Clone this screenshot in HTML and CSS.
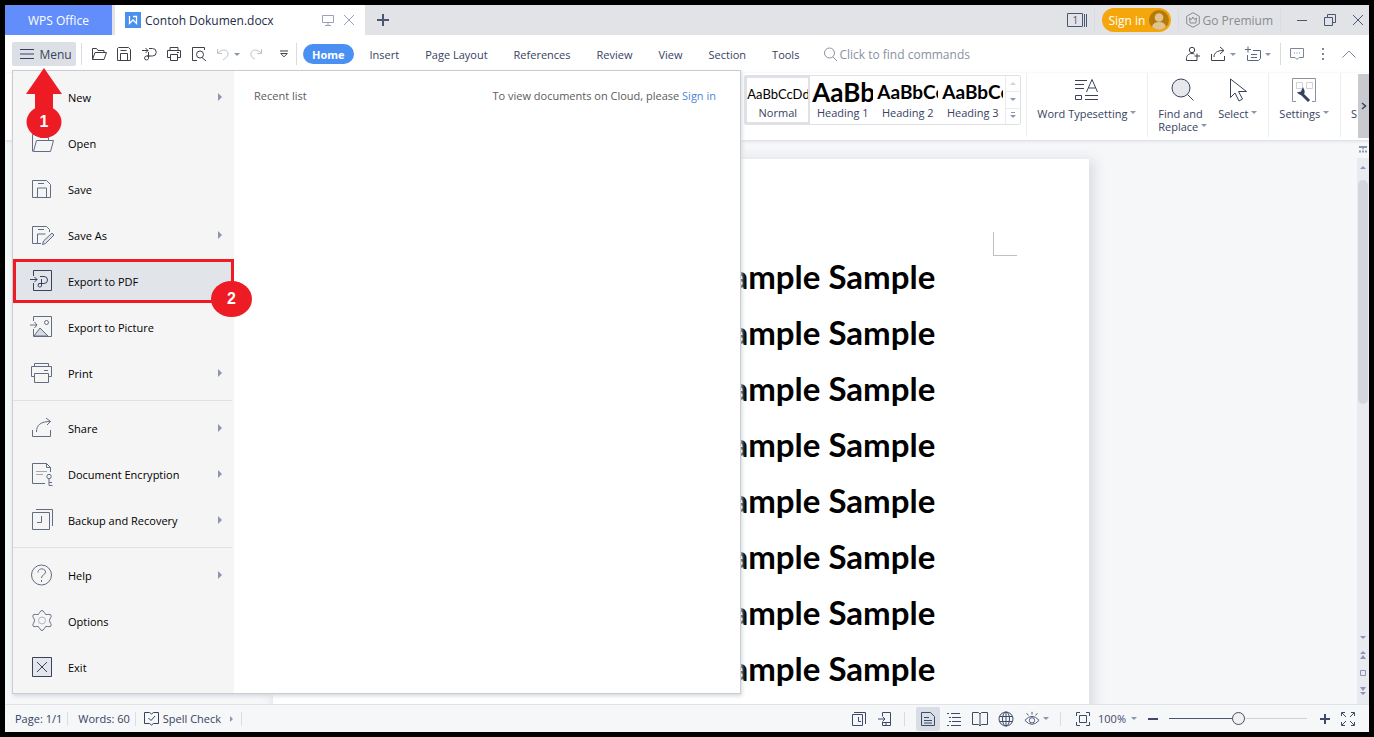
FILE: index.html
```html
<!DOCTYPE html>
<html lang="en">
<head>
    <meta charset="UTF-8">
    <meta name="viewport" content="width=device-width, initial-scale=1.0">
    <title>Contoh Dokumen.docx - WPS Office</title>
    <link rel="stylesheet" href="styles.css">
</head>
<body>
    <header class="titlebar">
        <button class="app-tab">WPS Office</button>
        <div class="doc-tab">
            <svg class="logo" width="16" height="16" viewBox="0 0 16 16"><rect width="16" height="16" fill="#4a90ee"/><path d="M4.500 4v7.500L8 8l3.500 3.500v-7H8" fill="none" stroke="#fff" stroke-width="1.300"/></svg>
            <span class="doc-name">Contoh Dokumen.docx</span>
            <button class="icon-btn pale" aria-label="Show on desktop"><svg width="12" height="12" viewBox="0 0 12 12"><path d="M.5 1.500h11v7H.5zM6 8.500v3M3 11.500h6"/></svg></button>
            <button class="icon-btn pale" aria-label="Close tab"><svg width="12" height="12" viewBox="0 0 12 12"><path d="M1 1l10 10M11 1L1 11"/></svg></button>
        </div>
        <button class="icon-btn new-tab" aria-label="New tab"><svg width="12" height="12" viewBox="0 0 12 12"><path d="M6 0v12M0 6h12" stroke-width="2"/></svg></button>
        <div class="title-right">
            <button class="icon-btn pages" aria-label="Window list"><svg width="20" height="14" viewBox="0 0 20 14"><path d="M.5.5h15v13H.5zM17.500 1v13M19.500 1v13"/></svg><span>1</span></button>
            <span class="divider"></span>
            <button class="sign-in">Sign in
                <svg width="20" height="20" viewBox="0 0 20 20"><circle cx="10" cy="10" r="10" fill="#b57a08"/><circle cx="10" cy="7.500" r="4.300" fill="#dfc48f"/><path d="M3 17q1-5 7-5t7 5q-7 6-14 0z" fill="#dfc48f"/></svg>
            </button>
            <span class="divider"></span>
            <button class="premium">
                <svg width="14" height="16" viewBox="0 0 14 16"><path d="M7 .7l6.300 3.600v7.400L7 15.300.7 11.700V4.300zM3.500 6l2 1.500L7 5l1.500 2.500 2-1.500-.7 5H4.200z"/></svg>
                Go Premium
            </button>
            <span class="divider"></span>
            <div class="window-btns">
                <button class="icon-btn" aria-label="Minimize"><svg width="12" height="12" viewBox="0 0 12 12"><path d="M1 6.500h10"/></svg></button>
                <button class="icon-btn" aria-label="Restore"><svg width="12" height="12" viewBox="0 0 12 12"><path d="M.5 3.500h8v8h-8zM3.500 3V.5h8v8H9"/></svg></button>
                <button class="icon-btn" aria-label="Close"><svg width="12" height="12" viewBox="0 0 12 12"><path d="M1 1l10 10M11 1L1 11"/></svg></button>
            </div>
        </div>
    </header>

    <div class="toolbar">
        <div class="menu-anchor">
            <button class="menu-btn">
                <svg width="14" height="10" viewBox="0 0 14 10"><path d="M0 .5h14M0 5h14M0 9.500h14"/></svg>
                Menu
            </button>
            <div class="callout-one">
                <svg width="36" height="70" viewBox="0 0 36 70"><path d="M18 0l18 26h-9v20H9V26H0z" fill="#ed1c24"/><ellipse cx="18" cy="54" rx="17.500" ry="16" fill="#ed1c24"/></svg>
                <span>1</span>
            </div>
        </div>
        <span class="divider"></span>
        <div class="quick">
            <button class="icon-btn" aria-label="Open"><svg width="16" height="16" viewBox="0 0 16 16"><path d="M1.500 13.500v-11h4l1.500 2h6v2M1.500 13.500l2.500-7h11.500l-2.500 7z"/></svg></button>
            <button class="icon-btn" aria-label="Save"><svg width="16" height="16" viewBox="0 0 16 16"><path d="M1.500 2.500l1-1h10l2 2v11h-13zM4.500 14V7.500h7V14M4.500 4.500h6"/></svg></button>
            <button class="icon-btn" aria-label="Export to PDF"><svg width="16" height="16" viewBox="0 0 16 16"><path d="M1 4.500h6M4.500 2L7 4.500 4.500 7M8 2.500h3.500a3.500 3.500 0 010 7.500H6M7.500 6v6.500a2 2 0 11-2-2.500h3"/></svg></button>
            <button class="icon-btn" aria-label="Print"><svg width="16" height="16" viewBox="0 0 16 16"><path d="M4 4V1.500h8V4M4 11.500H1.500v-7h13v7H12M4.500 8.500h7v6h-7zM11 6.500h2"/></svg></button>
            <button class="icon-btn" aria-label="Print preview"><svg width="16" height="16" viewBox="0 0 16 16"><path d="M6 14.500H1.500v-13h12V4M11 11.500l4 3.500"/><circle cx="9" cy="8.500" r="3.500"/></svg></button>
            <button class="icon-btn faint with-caret" aria-label="Undo"><svg width="14" height="14" viewBox="0 0 14 14"><path d="M1.500 2v4.500H6M1.500 6.500C5 2 11 2 12 6c.5 3-2 5-5 7"/></svg><i class="caret"></i></button>
            <button class="icon-btn faint" aria-label="Redo"><svg width="14" height="14" viewBox="0 0 14 14"><path d="M12.500 2v4.500H8M12.500 6.500C9 2 3 2 2 6c-.5 3 1 5 4 6"/></svg></button>
            <button class="icon-btn more" aria-label="Customize"><svg width="8" height="8" viewBox="0 0 8 8"><path d="M0 1h8M.7 3.500L4 6.800l3.300-3.300z"/></svg></button>
        </div>
        <span class="divider"></span>
        <nav class="tabs">
            <button class="tab active">Home</button>
            <button class="tab">Insert</button>
            <button class="tab">Page Layout</button>
            <button class="tab">References</button>
            <button class="tab">Review</button>
            <button class="tab">View</button>
            <button class="tab">Section</button>
            <button class="tab">Tools</button>
        </nav>
        <label class="search">
            <svg width="16" height="16" viewBox="0 0 16 16"><circle cx="6.500" cy="7" r="5"/><path d="M10 11l4 4"/></svg>
            <input type="text" placeholder="Click to find commands" aria-label="Find commands">
        </label>
        <div class="tool-right">
            <button class="icon-btn dark" aria-label="Invite"><svg width="16" height="16" viewBox="0 0 16 16"><circle cx="7" cy="4" r="2.700"/><path d="M9 14.500H1.500C1 10 3 7.500 7 7.500q1.500 0 2.500.7M9 14.500h3v-2M12 7.500v5M9.500 10H15"/></svg></button>
            <button class="icon-btn dark with-caret" aria-label="Share"><svg width="16" height="16" viewBox="0 0 16 16"><path d="M1.500 8v6.500h13V10M4 11c0-4 3-6.500 9-6.500M10 1l4 3.500L10 8"/></svg><i class="caret"></i></button>
            <button class="icon-btn with-caret" aria-label="Add note"><svg width="16" height="16" viewBox="0 0 16 16"><path d="M0 3.500h6M3 .5v6M8 4.500h7.500v8l-2 2h-11V9M6 8.500h6M6 11.500h6"/></svg><i class="caret"></i></button>
            <span class="divider"></span>
            <button class="icon-btn soft" aria-label="Comments"><svg width="14" height="14" viewBox="0 0 14 14"><path d="M.5 1.500h13v9H9l-2 2-2-2H.5zM4 6h1M6.500 6h1M9 6h1"/></svg></button>
            <button class="icon-btn soft" aria-label="More"><svg width="4" height="14" viewBox="0 0 4 14"><path d="M2 1v2M2 6v2M2 11v2" stroke-width="2"/></svg></button>
            <button class="icon-btn soft" aria-label="Collapse ribbon"><svg width="14" height="8" viewBox="0 0 14 8"><path d="M.5 7.500L7 1l6.500 6.500"/></svg></button>
        </div>
    </div>

    <div class="ribbon">
        <div class="gallery">
            <button class="style-card selected"><span class="preview">AaBbCcDd</span>Normal</button>
            <button class="style-card"><span class="preview big">AaBb</span>Heading 1</button>
            <button class="style-card"><span class="preview mid">AaBbCc</span>Heading 2</button>
            <button class="style-card"><span class="preview mid">AaBbCc</span>Heading 3</button>
            <div class="gallery-nav">
                <button aria-label="Previous styles"><i class="caret up"></i></button>
                <button aria-label="Next styles"><i class="caret"></i></button>
                <button aria-label="All styles"><i class="caret lined"></i></button>
            </div>
        </div>
        <div class="group">
            <button class="tool">
                <svg width="24" height="24" viewBox="0 0 24 24"><path d="M0 2.500h12M0 6.500h9M0 10.500h9M.5 17.500h6v4h-6zM10 17.500h13M10 21.500h13M11.500 14L17 1.500 22.500 14M13.500 10h7"/></svg>
                <span>Word Typesetting <i class="caret"></i></span>
            </button>
        </div>
        <div class="group">
            <button class="tool">
                <svg width="24" height="24" viewBox="0 0 24 24"><circle cx="10" cy="10" r="9" fill="#e6e8ec"/><path d="M16.500 16.500l6 6"/></svg>
                <span>Find and<br>Replace <i class="caret"></i></span>
            </button>
            <button class="tool">
                <svg width="24" height="24" viewBox="0 0 24 24"><path d="M4.500 1v18.500l4.500-4.500 4 8 3.500-2-4-7.500h8z"/></svg>
                <span>Select <i class="caret"></i></span>
            </button>
        </div>
        <div class="group">
            <button class="tool">
                <svg width="24" height="24" viewBox="0 0 24 24"><path d="M4 23.500H.5V.5h23v23H20" stroke="#8d919b"/><path d="M4.500 4.500h6v6h-6zM14.500 4.500h6v6h-6z" stroke="#d0d2d6"/><path d="M10 16l7 7" stroke-width="3"/><path d="M11 11.500c2 4-1 6-4 3.500l2.500-.5z" stroke-width="2"/></svg>
                <span>Settings <i class="caret"></i></span>
            </button>
        </div>
        <div class="group cut"><span>S</span></div>
        <button class="ribbon-next" aria-label="Scroll ribbon"><svg width="6" height="8" viewBox="0 0 6 8"><path d="M1 1l3.500 3L1 7" stroke-width="1.500"/></svg></button>
    </div>

    <main class="workspace">
        <div class="canvas">
            <article class="page">
                <div class="page-head"><span class="corner left"></span><span class="corner"></span></div>
                <div class="page-text">
                    <p>Sample Sample Sample Sample Sample</p>
                    <p>Sample Sample Sample Sample Sample</p>
                    <p>Sample Sample Sample Sample Sample</p>
                    <p>Sample Sample Sample Sample Sample</p>
                    <p>Sample Sample Sample Sample Sample</p>
                    <p>Sample Sample Sample Sample Sample</p>
                    <p>Sample Sample Sample Sample Sample</p>
                    <p>Sample Sample Sample Sample Sample</p>
                </div>
            </article>
        </div>
        <div class="scrollbar">
            <button class="ruler-btn" aria-label="Ruler"><svg width="8" height="8" viewBox="0 0 8 8"><path d="M0 1h8v2H5l-1 2-1-2H0zM0 5.500h2v2H0zM3 5.500h2v2H3zM6 5.500h2v2H6z"/></svg></button>
            <button aria-label="Scroll up"><i class="caret up"></i></button>
            <div class="track"><div class="thumb"></div></div>
            <button aria-label="Scroll down"><i class="caret"></i></button>
            <button aria-label="Previous page"><svg width="6" height="8" viewBox="0 0 6 8"><path d="M3 0l3 3H0zM3 4l3 4H0z"/></svg></button>
            <button aria-label="Select browse object"><svg width="6" height="6" viewBox="0 0 6 6"><path d="M.5.5h5v5h-5z" class="outline"/></svg></button>
            <button aria-label="Next page"><svg width="6" height="8" viewBox="0 0 6 8"><path d="M3 4L0 0h6zM3 8L0 5h6z"/></svg></button>
        </div>
    </main>

    <footer class="statusbar">
        <span class="stat">Page: 1/1</span>
        <span class="stat">Words: 60</span>
        <button class="stat spell">
            <svg width="15" height="15" viewBox="0 0 15 15"><path d="M5.500 1.500h-5v11h5l2 1.500 2-1.500h5v-11h-5l-2 1.500zM4.500 7l2.500 2.500L11 5"/></svg>
            Spell Check <i class="caret right"></i>
        </button>
        <div class="status-right">
            <button class="icon-btn" aria-label="History"><svg width="16" height="16" viewBox="0 0 16 16"><path d="M1.500 3.500h10v11h-10zM3 1.500h11.500V13M7.500 6v4.500H10"/></svg></button>
            <button class="icon-btn" aria-label="Send to phone"><svg width="16" height="16" viewBox="0 0 16 16"><path d="M5.500 5V1.500h8v13h-8V11M6 11.500h7M1 8h7M5.500 5.500L8 8l-2.500 2.500M8 13h2"/></svg></button>
            <span class="divider"></span>
            <button class="icon-btn on" aria-label="Print layout"><svg width="16" height="16" viewBox="0 0 16 16"><path d="M1.500 1.500h9l4 4v9h-13zM4 6.500h5M4 9.500h8M4 12h8"/></svg></button>
            <button class="icon-btn" aria-label="Outline"><svg width="16" height="16" viewBox="0 0 16 16"><path d="M1 2.500h2M5 2.500h9M3 6.500h2M6 6.500h9M3 10.500h2M6 10.500h9M1 14.500h2M5 14.500h10"/></svg></button>
            <button class="icon-btn" aria-label="Reading"><svg width="16" height="16" viewBox="0 0 16 16"><path d="M.5 1.500h6L8 3l1.500-1.500h6v12h-6L8 15l-1.500-1.500h-6zM8 3v12"/></svg></button>
            <button class="icon-btn" aria-label="Web layout"><svg width="16" height="16" viewBox="0 0 16 16"><circle cx="8" cy="8" r="7"/><ellipse cx="8" cy="8" rx="3.500" ry="7"/><path d="M1.500 5.500h13M1.500 10.500h13M8 1v14"/></svg></button>
            <button class="icon-btn with-caret" aria-label="Eye protection"><svg width="16" height="16" viewBox="0 0 18 16"><path d="M1 9.500q8-9 16 0-8 9-16 0zM9 0v3M3 1.500l2 2.500M15 1.500L13 4"/><circle cx="9" cy="9.500" r="3"/></svg><i class="caret"></i></button>
            <span class="divider"></span>
            <button class="icon-btn fit" aria-label="Fit page"><svg width="16" height="16" viewBox="0 0 16 16"><path d="M4.500 4.500h7v7h-7zM1.500 5V1.500H5M11 1.500h3.500V5M14.500 11v3.500H11M5 14.500H1.500V11"/></svg></button>
            <button class="zoom-value">100% <i class="caret"></i></button>
            <button class="icon-btn bold" aria-label="Zoom out"><svg width="10" height="10" viewBox="0 0 10 10"><path d="M0 5h10"/></svg></button>
            <input class="zoom" type="range" min="0" max="100" value="50" aria-label="Zoom">
            <button class="icon-btn bold" aria-label="Zoom in"><svg width="10" height="10" viewBox="0 0 10 10"><path d="M0 5h10M5 0v10"/></svg></button>
            <button class="icon-btn" aria-label="Full screen"><svg width="14" height="14" viewBox="0 0 14 14"><path d="M.5 4V.5H4M10 .5h3.500V4M13.500 10v3.500H10M4 13.500H.5V10M1 1l4 4M13 1L9 5M13 13L9 9M1 13l4-4"/></svg></button>
        </div>
    </footer>

    <!-- main menu, lies over the ribbon and the page -->
    <section class="menu">
        <nav class="menu-list">
            <button class="menu-item"><svg width="24" height="24" viewBox="0 0 24 24"><path d="M5.500 2.500h9l4 4v15h-13z"/></svg>New<i class="caret right"></i></button>
            <button class="menu-item"><svg width="24" height="24" viewBox="0 0 24 24"><path d="M2.500 20.500v-17h6l2 3h8v3M3.500 20.500l3-11h17l-3 11z"/></svg>Open</button>
            <button class="menu-item"><svg width="24" height="24" viewBox="0 0 24 24"><path d="M2.500 3.500h14l4 4v13h-18zM7.500 20v-9h9v9M8 6.500h6"/></svg>Save</button>
            <button class="menu-item"><svg width="24" height="24" viewBox="0 0 24 24"><path d="M11 20.500H2.500v-17h14l3 3V9M7.500 20v-9h8M8 6.500h6"/><path d="M12.500 21.500l1-3.500 8.500-8 2 2-8.500 8.500z" fill="#dfe1e6"/></svg>Save As<i class="caret right"></i></button>
            <button class="menu-item current"><svg width="24" height="24" viewBox="0 0 24 24"><path d="M3.500 7V1.500h18v20h-18V14M0 10.500h7M4.500 8L7 10.500 4.500 13M10 7.500h4a3.500 3.500 0 010 7H8.500M11.500 10v7a1.800 1.800 0 11-1.800-2.500"/></svg>Export to PDF
                <span class="callout-two">2</span>
            </button>
            <button class="menu-item"><svg width="24" height="24" viewBox="0 0 24 24"><path d="M4 21l6-8 8 8H4z" fill="#d9dbe1"/><path d="M3.500 6V1.500h18v20h-18V14M0 10h7M4.500 7L7 10l-2.500 3"/><circle cx="16.500" cy="7.500" r="2"/></svg>Export to Picture</button>
            <button class="menu-item"><svg width="24" height="24" viewBox="0 0 24 24"><path d="M4.500 5.500v-3h14v3M4.500 15.500h-3v-10h20v10h-3M4.500 12.500h14v9h-14zM14 9.500h4"/></svg>Print<i class="caret right"></i></button>
            <hr>
            <button class="menu-item"><svg width="24" height="24" viewBox="0 0 24 24"><path d="M2.500 14v6.500h18V14M6.500 16c0-7 4-10.500 14-10.500M16 2l4.500 3.500L17 9"/></svg>Share<i class="caret right"></i></button>
            <button class="menu-item"><svg width="24" height="24" viewBox="0 0 24 24"><path d="M15 21.500H2.500v-20h14l4 4V10M16.500 1.500v4h4"/><path d="M6 9.500h11M6 12.500h7" stroke="#a3a8b4"/><circle cx="19" cy="14.500" r="2.200"/><path d="M19 17v6.500h3.500M19 20.500h3"/></svg>Document Encryption<i class="caret right"></i></button>
            <button class="menu-item"><svg width="24" height="24" viewBox="0 0 24 24"><path d="M2.500 4.500h17v17h-17zM6 1.500h16.500V18M11.500 8v6.500H7"/></svg>Backup and Recovery<i class="caret right"></i></button>
            <hr>
            <button class="menu-item"><svg width="24" height="24" viewBox="0 0 24 24"><circle cx="11.500" cy="12" r="10"/><path d="M8 9.500c0-5 7.500-4.500 7.500-.5 0 3-4 2.500-4 6M11.500 17v2"/></svg>Help<i class="caret right"></i></button>
            <button class="menu-item"><svg width="24" height="24" viewBox="0 0 24 24"><path d="M12 1.500c2 0 2.500 3.500 4 4 1.500.4 4-1 5 .7s-1.500 3-1.500 5.300 2.500 3.600 1.500 5.300-3.500.3-5 .7c-1.500.5-2 4-4 4s-2.500-3.500-4-4c-1.500-.4-4 1-5-.7s1.500-3 1.500-5.300S2 7.900 3 6.200s3.500-.3 5-.7c1.500-.5 2-4 4-4z"/><circle cx="12" cy="11.500" r="3.500" stroke="#b3b7c1"/></svg>Options</button>
            <button class="menu-item"><svg class="strong" width="24" height="24" viewBox="0 0 24 24"><path d="M2.500 2.500h19v19h-19z" fill="#e4e6eb"/><path d="M7 7l10 10M17 7L7 17"/></svg>Exit</button>
        </nav>
        <div class="recent">
            <span>Recent list</span>
            <span>To view documents on Cloud, please <a href="#">Sign in</a></span>
        </div>
    </section>
</body>
</html>
```

FILE: styles.css
```css
* {
    box-sizing: border-box;
}

body {
    margin: 0;
    height: 100vh;
    border: 5px solid #000;
    display: flex;
    flex-direction: column;
    position: relative;
    overflow: hidden;
    background: #f5f7f9;
    color: #38425f;
    font-family: "Open Sans", "Noto Sans", sans-serif;
    font-size: 11px;
}

button {
    padding: 0;
    border: none;
    background: none;
    color: inherit;
    font: inherit;
    cursor: pointer;
}

svg {
    display: block;
    flex: none;
    fill: none;
    stroke: currentColor;
    overflow: visible;
}

.divider {
    width: 1px;
    height: 22px;
    background: #d9dbe0;
}

.icon-btn {
    display: flex;
    align-items: center;
    justify-content: center;
    position: relative;
}

/* small triangles */
.caret {
    display: inline-block;
    flex: none;
    border: 3px solid transparent;
    border-top-color: #8a96b2;
    border-bottom-width: 0;
}

.caret.up {
    border-top-width: 0;
    border-bottom: 3px solid #8a96b2;
}

.caret.right {
    border: 4px solid transparent;
    border-left-color: #8a96b2;
    border-right-width: 0;
}

.caret.lined {
    box-shadow: 0 -3px 0 -1px #fff, 0 -4px 0 -1px #8a96b2;
}

/* title bar */
.titlebar {
    flex: none;
    height: 30px;
    display: flex;
    align-items: stretch;
    background: #e1e3e7;
}

.app-tab {
    width: 107px;
    margin-right: 3px;
    background: #628efc;
    color: #fff;
    font-size: 12px;
}

.doc-tab {
    width: 250px;
    padding: 0 10px;
    display: flex;
    align-items: center;
    gap: 9px;
    background: #fff;
}

.logo {
    stroke: none;
}

.doc-name {
    flex: 1;
    margin-left: -5px;
    color: #232c48;
    font-size: 12px;
    white-space: nowrap;
}

.pale {
    color: #98a3bb;
}

.new-tab {
    width: 36px;
    color: #4a5674;
}

.title-right {
    margin-left: auto;
    display: flex;
    align-items: center;
    gap: 7px;
    color: #4a5674;
}

.pages span {
    position: absolute;
    left: 5px;
    top: 0;
    font-size: 10px;
    line-height: 14px;
}

.sign-in {
    height: 24px;
    padding: 0 2px 0 6px;
    display: flex;
    align-items: center;
    gap: 4px;
    border-radius: 12px;
    background: #f5a60b;
    color: #fff;
    font-size: 12px;
}

.sign-in svg {
    stroke: none;
}

.premium {
    display: flex;
    align-items: center;
    gap: 2px;
    color: #8b8b8e;
    font-size: 12px;
}

.window-btns {
    display: flex;
    gap: 16px;
    padding: 0 5px 0 8px;
}

/* toolbar */
.toolbar {
    flex: none;
    height: 38px;
    padding: 0 9px 0 7px;
    display: flex;
    align-items: center;
    background: #fff;
}

.menu-anchor {
    position: relative;
    margin-right: 5px;
}

.menu-btn {
    width: 64px;
    height: 24px;
    padding-left: 4px;
    display: flex;
    align-items: center;
    justify-content: center;
    gap: 5px;
    border-radius: 2px;
    background: #dce0e6;
    font-size: 12px;
}

.callout-one {
    position: absolute;
    left: 14px;
    top: 26px;
    z-index: 3;
    color: #fff;
}

.callout-one svg {
    stroke: none;
}

.callout-one span {
    position: absolute;
    left: 0;
    right: 0;
    bottom: 6px;
    font: bold 16px/20px "Liberation Sans", sans-serif;
    text-align: center;
}

.quick {
    display: flex;
    align-items: center;
    gap: 9px;
    margin: 0 8px 0 9px;
    color: #3d4147;
}

.with-caret {
    gap: 4px;
}

.faint {
    color: #c0c4cc;
}

.more {
    margin-left: 8px;
}

.tabs {
    display: flex;
    align-items: center;
    margin-left: 6px;
}

.tab {
    height: 20px;
    padding: 0 13px;
    white-space: nowrap;
}

.tab.active {
    margin-right: 3px;
    padding: 0 9px;
    border-radius: 10px;
    background: #4a90f2;
    color: #fff;
    font-weight: bold;
}

.search {
    flex: 1;
    margin-left: 11px;
    display: flex;
    align-items: center;
    color: #8a919f;
}

.search input {
    width: 100%;
    min-width: 0;
    padding: 0;
    border: none;
    outline: none;
    background: none;
    font: 12px "Open Sans", "Noto Sans", sans-serif;
}

.search input::placeholder {
    color: #8a919f;
}

.tool-right {
    display: flex;
    align-items: center;
    gap: 9px;
    color: #5a6684;
}

.tool-right .divider {
    margin-right: -4px;
}

.dark {
    color: #3d4147;
}

.soft {
    color: #7c869c;
    margin: 0 4px;
}

/* ribbon */
.ribbon {
    flex: none;
    height: 67px;
    display: flex;
    justify-content: flex-end;
    background: #fff;
    box-shadow: 0 1px 3px #d5d8dc;
    position: relative;
}

.gallery {
    display: flex;
    height: 50px;
    margin: 2px 5px 0 0;
    border: 1px solid #dfe1e7;
    border-radius: 2px;
}

.style-card {
    width: 65px;
    padding: 0 2px;
    display: flex;
    flex-direction: column;
    align-items: center;
    line-height: 14px;
    overflow: hidden;
}

.style-card.selected {
    border: 2px solid #dfe1e7;
    padding: 0;
}

.style-card.selected .preview {
    height: 28px;
}

.preview {
    align-self: stretch;
    height: 30px;
    overflow: hidden;
    color: #000;
    font-family: Lato, sans-serif;
    font-size: 13px;
    line-height: 32px;
    text-align: left;
}

.preview.big {
    font-size: 26px;
    font-weight: bold;
}

.preview.mid {
    font-size: 19px;
    font-weight: bold;
}

.gallery-nav {
    width: 15px;
    display: grid;
    border-left: 1px solid #e9ebef;
}

.gallery-nav button {
    display: flex;
    align-items: center;
    justify-content: center;
}

.gallery-nav button + button {
    border-top: 1px solid #e9ebef;
}

.gallery-nav .up {
    opacity: 0.4;
}

.group {
    height: 64px;
    padding: 0 11px 0 10px;
    display: flex;
    align-items: flex-start;
    gap: 11px;
    border-left: 1px solid #eceef1;
}

.tool {
    display: flex;
    flex-direction: column;
    align-items: center;
    gap: 5px;
    padding-top: 5px;
    line-height: 13px;
    text-align: left;
    white-space: nowrap;
}

.tool .caret {
    vertical-align: 4px;
}

.cut {
    width: 18px;
    padding: 34px 0 0 10px;
    overflow: hidden;
    line-height: 13px;
}

.ribbon-next {
    width: 11px;
    height: 64px;
    margin-top: 1px;
    display: flex;
    align-items: center;
    justify-content: center;
    background: #c8cad0;
}

/* document */
.workspace {
    flex: 1;
    min-height: 0;
    display: flex;
}

.canvas {
    flex: 1;
    padding-top: 19px;
    overflow: hidden;
}

.page {
    width: 816px;
    height: 1056px;
    margin: 0 auto;
    background: #fff;
    box-shadow: 3px 3px 12px 2px #d9dce0;
}

.page-head {
    height: 97px;
    padding: 0 72px;
    display: flex;
    align-items: flex-end;
    justify-content: space-between;
}

.corner {
    width: 24px;
    height: 24px;
    border: 1px solid #c0c0c0;
    border-top: none;
    border-right: none;
}

.corner.left {
    border-left: none;
    border-right: 1px solid #c0c0c0;
}

.page-text {
    padding: 0 96px;
    color: #000;
    font-family: Lato, sans-serif;
    font-size: 33px;
    font-weight: bold;
    line-height: 40px;
    white-space: nowrap;
}

.page-text p {
    margin: 0 0 16px;
}

.scrollbar {
    width: 12px;
    padding-bottom: 4px;
    display: flex;
    flex-direction: column;
    background: #e9ebf0;
    color: #8a96b2;
}

.scrollbar button {
    height: 18px;
    display: flex;
    align-items: center;
    justify-content: center;
}

.scrollbar .ruler-btn {
    background: #f5f7f9;
}

.scrollbar svg {
    fill: currentColor;
    stroke: none;
}

.scrollbar .outline {
    fill: none;
    stroke: currentColor;
}

.track {
    flex: 1;
    padding-top: 4px;
}

.thumb {
    height: 50%;
    margin: 0 1px;
    border-radius: 5px;
    background: #d3d6dd;
}

/* status bar */
.statusbar {
    flex: none;
    height: 28px;
    padding: 0 14px 0 0;
    display: flex;
    align-items: center;
    border-top: 1px solid #e1e3e7;
    background: #f5f7f9;
}

.stat {
    height: 14px;
    padding: 0 5px 0 10px;
    display: flex;
    align-items: center;
    border-right: 1px solid #dcdee3;
    white-space: nowrap;
}

.spell {
    gap: 4px;
    padding: 0 8px;
}

.spell .caret {
    margin-left: 5px;
    border-width: 3px 0 3px 3px;
}

.status-right {
    margin-left: auto;
    display: flex;
    align-items: center;
    gap: 10px;
    color: #3f4a68;
}

.status-right .divider {
    height: 14px;
    margin: 0 1px;
}

.on {
    width: 24px;
    height: 24px;
    margin: 0 -4px 0 0;
    border-radius: 2px;
    background: #d9dee6;
}

.status-right .with-caret {
    gap: 3px;
}

.status-right .fit {
    margin-left: 3px;
}

.zoom-value {
    margin-left: -3px;
    display: flex;
    align-items: center;
    gap: 5px;
}

.bold svg {
    stroke-width: 2;
}

.bold {
    margin: 0 1px;
}

.zoom {
    width: 138px;
    height: 14px;
    margin: 0 2px 0 0;
    appearance: none;
    background: linear-gradient(90deg, #4a5674 50%, #cfd2d8 50%) center / 100% 1px no-repeat;
}

.zoom::-webkit-slider-thumb {
    appearance: none;
    width: 13px;
    height: 13px;
    border: 1px solid #4a4f5c;
    border-radius: 50%;
    background: #f0f0f0;
}

/* main menu */
.menu {
    position: absolute;
    left: 7px;
    top: 65px;
    width: 729px;
    display: flex;
    border: 1px solid #c9ccd1;
    background: #fff;
    box-shadow: 1px 2px 4px #d5d8dc;
    z-index: 2;
}

.menu-list {
    width: 221px;
    padding: 3px 1px 3px 0;
    background: #f5f5f5;
    color: #000;
}

.menu-item {
    width: 100%;
    height: 46px;
    padding: 0 11px 0 17px;
    display: flex;
    align-items: center;
    gap: 14px;
    position: relative;
    text-align: left;
}

.menu-item svg {
    color: #626c82;
}

.menu-item .caret {
    margin-left: auto;
}

.menu-item.current {
    width: 221px;
    height: 44px;
    margin: 1px 0;
    padding-left: 14px;
    border: 3px solid #ed1c24;
    background: #e1e4e9;
}

.menu-item.current svg,
.menu-item .strong {
    color: #38425f;
}

.callout-two {
    position: absolute;
    left: 195px;
    top: 19px;
    width: 41px;
    height: 36px;
    border-radius: 50%;
    background: #ed1c24;
    color: #fff;
    font: bold 16px/36px "Liberation Sans", sans-serif;
    text-align: center;
}

.menu hr {
    height: 1px;
    margin: 4px 1px 4px 0;
    border: none;
    background: #dfe1e7;
}

.recent {
    flex: 1;
    padding: 17px 24px 0 20px;
    display: flex;
    justify-content: space-between;
    color: #5c5c5c;
}

.recent a {
    color: #4a86d8;
    text-decoration: none;
}
```
